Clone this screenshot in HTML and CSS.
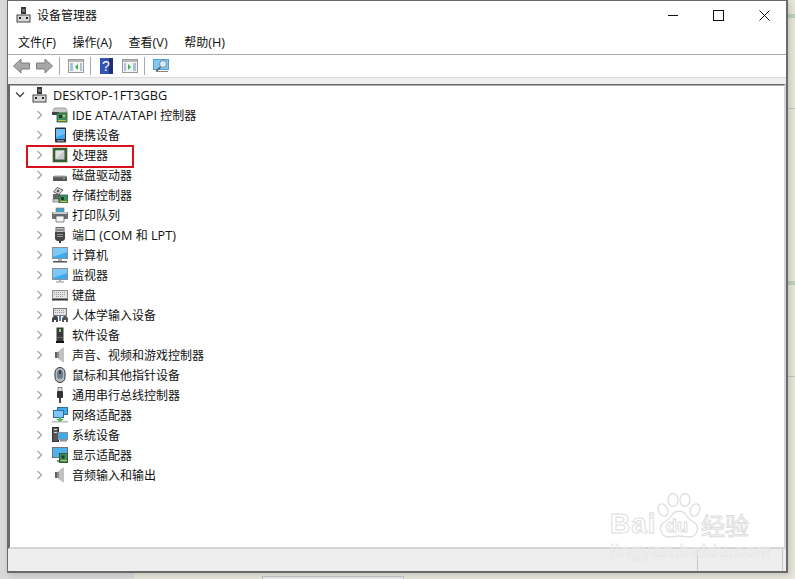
FILE: index.html
```html
<!DOCTYPE html>
<html lang="zh-CN">
<head>
    <meta charset="UTF-8">
    <meta name="viewport" content="width=device-width, initial-scale=1.0">
    <title>设备管理器</title>
    <link rel="stylesheet" href="styles.css">
</head>
<body>

<svg class="sprites" width="0" height="0">
    <defs>
        <symbol id="i-pc" viewBox="0 0 16 16">
            <rect x="5" y="0" width="5" height="7" fill="#333"/>
            <rect x="6" y="2" width="3" height="3" fill="#777"/>
            <rect x="1" y="8" width="13" height="7" fill="#d8d8d8" stroke="#444"/>
            <rect x="3" y="10" width="2" height="2" fill="#222"/>
            <rect x="10" y="10" width="2" height="2" fill="#222"/>
        </symbol>
        <symbol id="i-ide" viewBox="0 0 16 16">
            <path d="M1 3.500 2.500 1h11L15 3.500V6H1z" fill="#c9c9c9" stroke="#777" stroke-width=".6"/>
            <rect x="0" y="5" width="7" height="3" fill="#444"/>
            <rect x="5" y="6" width="10" height="9" fill="#3f8f5a" stroke="#28603c" stroke-width=".8"/>
            <rect x="7" y="8" width="3" height="3" fill="#1d3d2a"/>
            <rect x="11" y="8" width="2" height="2" fill="#d9c45a"/>
            <rect x="6" y="13" width="8" height="1" fill="#d9b84a"/>
        </symbol>
        <symbol id="i-phone" viewBox="0 0 16 16">
            <rect x="3" y="0.500" width="11" height="15" rx="1" fill="#2a2f38"/>
            <rect x="4" y="2" width="9" height="10" fill="#3fa3ee"/>
            <path d="M4 2h9v5L4 10z" fill="#6cc0f5"/>
            <rect x="5" y="13" width="7" height="1.500" fill="#8a8f96"/>
        </symbol>
        <symbol id="i-cpu" viewBox="0 0 16 16">
            <rect x="0.500" y="0.500" width="15" height="15" fill="none" stroke="#b9974a" stroke-dasharray="1 1"/>
            <rect x="1" y="1" width="14" height="14" fill="#2f5f43"/>
            <rect x="3.500" y="3.500" width="9" height="9" fill="#c9cbc9"/>
            <path d="M3.500 3.500h9l-9 9z" fill="#e2e4e2"/>
        </symbol>
        <symbol id="i-disk" viewBox="0 0 16 16">
            <path d="M2 9.500 3 8h10l1 1.500z" fill="#d2d2d2"/>
            <rect x="1" y="9.500" width="14" height="4.500" fill="#555"/>
            <rect x="1" y="9.500" width="14" height="1" fill="#8a8a8a"/>
            <rect x="11" y="11" width="2" height="1" fill="#66dd66"/>
        </symbol>
        <symbol id="i-store" viewBox="0 0 16 16">
            <path d="M5 .500 11 3 7 7.500 1.500 5z" fill="#d8d8d8" stroke="#444" stroke-width=".8"/>
            <circle cx="6" cy="4" r="1.300" fill="#555"/>
            <rect x="1" y="7" width="7" height="5" fill="#666"/>
            <rect x="1" y="12" width="6" height="3" fill="#cfcfcf" stroke="#555" stroke-width=".6"/>
            <rect x="7" y="8" width="9" height="8" fill="#3f8f5a" stroke="#28603c" stroke-width=".8"/>
            <rect x="9" y="10" width="3" height="3" fill="#1d3d2a"/>
            <rect x="8" y="14" width="7" height="1" fill="#d9b84a"/>
        </symbol>
        <symbol id="i-print" viewBox="0 0 16 16">
            <rect x="4" y="1" width="8" height="5" fill="#3fa3c8" stroke="#777" stroke-width=".6"/>
            <rect x="0" y="5" width="16" height="7" rx="1" fill="#6b6f75"/>
            <rect x="1" y="5" width="14" height="2" fill="#c8ccd0"/>
            <rect x="4" y="9" width="8" height="6" fill="#f6f6f6" stroke="#555" stroke-width=".7"/>
        </symbol>
        <symbol id="i-port" viewBox="0 0 16 16">
            <rect x="4" y="0.500" width="8" height="5" fill="#c8c8c8" stroke="#666"/>
            <path d="M6 2v2M8 2v2M10 2v2" stroke="#444"/>
            <path d="M3 5h10v7l-2 2H5l-2-2z" fill="#444"/>
            <rect x="5" y="7" width="6" height="1" fill="#999"/>
            <rect x="5" y="9" width="6" height="1" fill="#999"/>
            <rect x="7" y="14" width="2" height="2" fill="#333"/>
        </symbol>
        <symbol id="i-pcscreen" viewBox="0 0 16 16">
            <rect x="0.500" y="0.500" width="15" height="11" fill="#3fa9ee" stroke="#8a9299"/>
            <path d="M1 1h14v4L1 10z" fill="#7cc8f6"/>
            <rect x="6" y="12" width="4" height="2" fill="#a9b0b6"/>
            <rect x="1" y="14" width="14" height="1.500" fill="#555"/>
        </symbol>
        <symbol id="i-monitor" viewBox="0 0 16 16">
            <rect x="0.500" y="1.500" width="15" height="11" fill="#3fa9ee" stroke="#8a9299"/>
            <path d="M1 2h14v4L1 11z" fill="#7cc8f6"/>
            <rect x="7" y="13" width="2" height="1.500" fill="#a9b0b6"/>
            <rect x="4" y="14.500" width="8" height="1" fill="#8a9299"/>
        </symbol>
        <symbol id="i-kbd" viewBox="0 0 16 16">
            <rect x="0.500" y="3.500" width="15" height="8" fill="#e6e6e6" stroke="#8c8c8c"/>
            <path d="M2 5.500h12M2 7.500h12M4 9.500h8" stroke="#9a9a9a" stroke-dasharray="1 1"/>
            <rect x="0" y="12" width="16" height="1.500" fill="#333"/>
        </symbol>
        <symbol id="i-hid" viewBox="0 0 16 16">
            <rect x="1.500" y="1.500" width="13" height="7" fill="#e0e0e0" stroke="#777"/>
            <path d="M3 3.500h10M3 5.500h10" stroke="#999" stroke-dasharray="1 1"/>
            <path d="M0 15v-4l2-2h3l1 2v4H4v-2H2v2z" fill="#444"/>
            <path d="M10 15v-4l2-2h2l2 2v4h-2v-2h-2v2z" fill="#555"/>
            <rect x="7" y="9" width="2" height="5" fill="#3f7fc0"/>
        </symbol>
        <symbol id="i-soft" viewBox="0 0 16 16">
            <rect x="4.500" y="0.500" width="7" height="14" fill="#3a3a3a"/>
            <rect x="7" y="2" width="2" height="3" fill="#6fe07f"/>
            <rect x="4" y="14" width="8" height="2" fill="#111"/>
            <rect x="5" y="10" width="6" height="1" fill="#666"/>
        </symbol>
        <symbol id="i-sound" viewBox="0 0 16 16">
            <path d="M3 5h3l5.500-4.500v15L6 11H3z" fill="#8e9092"/>
            <path d="M7 3.500 11.500 .5v15L7 12z" fill="#bfc1c3"/>
            <rect x="3" y="5" width="2" height="6" fill="#5f6163"/>
        </symbol>
        <symbol id="i-mouse" viewBox="0 0 16 16">
            <rect x="3" y="0.500" width="10" height="15" rx="5" fill="#b7bcc2" stroke="#333"/>
            <rect x="5" y="3" width="6" height="9" rx="3" fill="#6f7c8a"/>
            <rect x="7" y="3" width="2" height="4" fill="#2f3a46"/>
        </symbol>
        <symbol id="i-usb" viewBox="0 0 16 16">
            <rect x="6" y="0.500" width="4" height="4" fill="#ddd" stroke="#666" stroke-width=".7"/>
            <rect x="5" y="4" width="6" height="7" rx="1" fill="#333"/>
            <rect x="7" y="11" width="2" height="5" fill="#444"/>
        </symbol>
        <symbol id="i-net" viewBox="0 0 16 16">
            <rect x="5.500" y="0.500" width="10" height="7" fill="#3fa9ee" stroke="#2f6f9f"/>
            <rect x="1.500" y="3.500" width="10" height="7" fill="#7cc8f6" stroke="#2f6f9f"/>
            <rect x="0" y="14" width="16" height="1.500" fill="#bbb"/>
            <path d="M7 10h2v2h3l-4 3-4-3h3z" fill="#49b84f"/>
        </symbol>
        <symbol id="i-sys" viewBox="0 0 16 16">
            <rect x="0.500" y="0.500" width="6" height="14" fill="#555" stroke="#333"/>
            <rect x="2" y="2" width="3" height="1" fill="#ddd"/>
            <rect x="2" y="5" width="3" height="1" fill="#ddd"/>
            <rect x="6.500" y="5.500" width="9" height="7" fill="#3fa9ee" stroke="#8a9299"/>
            <rect x="8" y="13" width="7" height="1.500" fill="#8a9299"/>
        </symbol>
        <symbol id="i-display" viewBox="0 0 16 16">
            <rect x="0.500" y="0.500" width="15" height="10" fill="#4fb0ee" stroke="#6b7680"/>
            <rect x="5" y="13" width="2" height="2" fill="#888"/>
            <rect x="7.500" y="6.500" width="8" height="9" fill="#3f8f5a" stroke="#28603c"/>
            <rect x="9.500" y="8.500" width="3" height="3" fill="#1d3d2a"/>
            <rect x="9" y="13" width="6" height="1" fill="#d9b84a"/>
        </symbol>
        <symbol id="i-chev-r" viewBox="0 0 8 10">
            <path d="M1.500 1 5.500 5l-4 4" fill="none" stroke="#a6a6a6" stroke-width="1.300"/>
        </symbol>
        <symbol id="i-chev-d" viewBox="0 0 10 8">
            <path d="M1 1.500 5 5.500l4-4" fill="none" stroke="#404040" stroke-width="1.300"/>
        </symbol>
    </defs>
</svg>

<!-- то, что видно за окном -->
<div class="backdrop">
    <i class="bd-green bd-g1"></i>
    <i class="bd-line bd-l1"></i>
    <i class="bd-green bd-g2"></i>
    <i class="bd-line bd-l2"></i>
    <i class="bd-tab"></i>
</div>

<div class="window">
    <header class="titlebar">
        <svg class="icon"><use href="#i-pc"/></svg>
        <span class="title">设备管理器</span>
        <div class="win-buttons">
            <span class="win-min"></span>
            <span class="win-max"></span>
            <svg class="win-close" width="11" height="11" viewBox="0 0 11 11">
                <path d="M.5.500l10 10M10.500.500l-10 10" stroke="#111" fill="none"/>
            </svg>
        </div>
    </header>

    <nav class="menubar">
        <span>文件<span class="lat">(F)</span></span>
        <span>操作<span class="lat">(A)</span></span>
        <span>查看<span class="lat">(V)</span></span>
        <span>帮助<span class="lat">(H)</span></span>
    </nav>

    <div class="toolbar">
        <svg class="arrow" width="17" height="16" viewBox="0 0 17 16">
            <path d="M.500 8 8 1v4h8.500v6H8v4z" fill="#a8a8a8" stroke="#7c7c7c"/>
        </svg>
        <svg class="arrow" width="17" height="16" viewBox="0 0 17 16">
            <path d="M16.500 8 9 1v4H.500v6H9v4z" fill="#a8a8a8" stroke="#7c7c7c"/>
        </svg>
        <i class="sep"></i>
        <svg class="tool" width="16" height="14" viewBox="0 0 16 14">
            <rect x="0.500" y="0.500" width="15" height="13" fill="#f4f4f4" stroke="#9a9a9a"/>
            <rect x="1" y="1" width="14" height="2" fill="#b9b9b9"/>
            <path d="M2 5h3M2 7h3M2 9h3M2 11h3M12 5h2M12 7h2M12 9h2M12 11h2" stroke="#5f8fc0"/>
            <path d="M10 5v6L7 8z" fill="#35b34a"/>
        </svg>
        <i class="sep"></i>
        <svg class="tool help" width="13" height="16" viewBox="0 0 13 16">
            <rect width="13" height="16" fill="#3553b5"/>
            <rect x="9" width="4" height="16" fill="#1d2f78"/>
            <text x="6" y="13" class="help-mark">?</text>
        </svg>
        <svg class="tool" width="16" height="14" viewBox="0 0 16 14">
            <rect x="0.500" y="0.500" width="15" height="13" fill="#f4f4f4" stroke="#9a9a9a"/>
            <rect x="1" y="1" width="14" height="2" fill="#b9b9b9"/>
            <path d="M2 5h2M2 7h2M2 9h2M2 11h2M11 5h3M11 7h3M11 9h3M11 11h3" stroke="#5f8fc0"/>
            <path d="M6 5v6l3-3z" fill="#35b34a"/>
        </svg>
        <i class="sep"></i>
        <svg class="tool" width="16" height="15" viewBox="0 0 16 15">
            <rect x="0.500" y="0.500" width="15" height="10" fill="#7cc8f6" stroke="#4f9fd0"/>
            <circle cx="10" cy="5" r="3.500" fill="#d5ecfb" stroke="#8a8a8a"/>
            <path d="M7.500 8 3 12.500" stroke="#555" stroke-width="1.500"/>
            <rect x="3" y="12" width="12" height="1" fill="#888"/>
        </svg>
    </div>

    <div class="band"></div>

    <main class="tree">
        <div class="row root">
            <svg class="chev-down"><use href="#i-chev-d"/></svg>
            <svg class="icon"><use href="#i-pc"/></svg>
            <span class="lat">DESKTOP-1FT3GBG</span>
        </div>
        <div class="row"><svg class="chev"><use href="#i-chev-r"/></svg><svg class="icon"><use href="#i-ide"/></svg><span><span class="lat">IDE ATA/ATAPI </span>控制器</span></div>
        <div class="row"><svg class="chev"><use href="#i-chev-r"/></svg><svg class="icon"><use href="#i-phone"/></svg><span>便携设备</span></div>
        <div class="row marked"><svg class="chev"><use href="#i-chev-r"/></svg><svg class="icon"><use href="#i-cpu"/></svg><span>处理器</span></div>
        <div class="row"><svg class="chev"><use href="#i-chev-r"/></svg><svg class="icon"><use href="#i-disk"/></svg><span>磁盘驱动器</span></div>
        <div class="row"><svg class="chev"><use href="#i-chev-r"/></svg><svg class="icon"><use href="#i-store"/></svg><span>存储控制器</span></div>
        <div class="row"><svg class="chev"><use href="#i-chev-r"/></svg><svg class="icon"><use href="#i-print"/></svg><span>打印队列</span></div>
        <div class="row"><svg class="chev"><use href="#i-chev-r"/></svg><svg class="icon"><use href="#i-port"/></svg><span>端口<span class="lat"> (COM </span>和<span class="lat"> LPT)</span></span></div>
        <div class="row"><svg class="chev"><use href="#i-chev-r"/></svg><svg class="icon"><use href="#i-pcscreen"/></svg><span>计算机</span></div>
        <div class="row"><svg class="chev"><use href="#i-chev-r"/></svg><svg class="icon"><use href="#i-monitor"/></svg><span>监视器</span></div>
        <div class="row"><svg class="chev"><use href="#i-chev-r"/></svg><svg class="icon"><use href="#i-kbd"/></svg><span>键盘</span></div>
        <div class="row"><svg class="chev"><use href="#i-chev-r"/></svg><svg class="icon"><use href="#i-hid"/></svg><span>人体学输入设备</span></div>
        <div class="row"><svg class="chev"><use href="#i-chev-r"/></svg><svg class="icon"><use href="#i-soft"/></svg><span>软件设备</span></div>
        <div class="row"><svg class="chev"><use href="#i-chev-r"/></svg><svg class="icon"><use href="#i-sound"/></svg><span>声音、视频和游戏控制器</span></div>
        <div class="row"><svg class="chev"><use href="#i-chev-r"/></svg><svg class="icon"><use href="#i-mouse"/></svg><span>鼠标和其他指针设备</span></div>
        <div class="row"><svg class="chev"><use href="#i-chev-r"/></svg><svg class="icon"><use href="#i-usb"/></svg><span>通用串行总线控制器</span></div>
        <div class="row"><svg class="chev"><use href="#i-chev-r"/></svg><svg class="icon"><use href="#i-net"/></svg><span>网络适配器</span></div>
        <div class="row"><svg class="chev"><use href="#i-chev-r"/></svg><svg class="icon"><use href="#i-sys"/></svg><span>系统设备</span></div>
        <div class="row"><svg class="chev"><use href="#i-chev-r"/></svg><svg class="icon"><use href="#i-display"/></svg><span>显示适配器</span></div>
        <div class="row"><svg class="chev"><use href="#i-chev-r"/></svg><svg class="icon"><use href="#i-sound"/></svg><span>音频输入和输出</span></div>
    </main>

    <footer class="statusbar">
        <div class="status-cell grow"></div>
        <div class="status-cell wide"></div>
        <div class="status-cell"></div>
    </footer>
</div>

<!-- водяной знак поверх окна -->
<div class="watermark">
    <svg class="paw" width="44" height="46" viewBox="0 0 44 46">
        <g fill="none" stroke="#dddddd" stroke-width="1.300">
            <ellipse cx="6" cy="17" rx="4.500" ry="6.500" transform="rotate(-25 6 17)"/>
            <ellipse cx="16" cy="7" rx="5" ry="6.500"/>
            <ellipse cx="28" cy="7" rx="5" ry="6.500"/>
            <ellipse cx="38" cy="17" rx="4.500" ry="6.500" transform="rotate(25 38 17)"/>
            <path d="M12 44c-8 0-11-9-6-14 4-3 7-4 9-8 3-5 11-5 14 0 2 4 5 5 9 8 5 5 2 14-6 14-4 0-5-1-10-1s-6 1-10 1z"/>
        </g>
    </svg>
    <span class="wm-bai">Bai</span>
    <span class="wm-du">du</span>
    <span class="wm-cn">经验</span>
    <span class="wm-url">jingyan.baidu.com</span>
</div>

</body>
</html>
```

FILE: styles.css
```css
html, body {
    margin: 0;
    padding: 0;
    height: 579px;
    overflow: hidden;
}
body {
    position: relative;
    background: linear-gradient(90deg, #d9d9d9 0, #d9d9d9 134px, #e6e6da 134px);
    font-family: "Open Sans", "Noto Sans CJK SC", sans-serif;
    font-size: 12px;
    color: #111;
}
.sprites {
    position: absolute;
}
.lat {
    font-size: 12.7px;
}
.backdrop i {
    position: absolute;
    display: block;
}
.bd-green {
    left: 788px;
    width: 7px;
    height: 4px;
    background: #b9d2bb;
}
.bd-g1 {
    top: 14px;
}
.bd-g2 {
    top: 281px;
}
.bd-line {
    left: 788px;
    width: 7px;
    height: 1px;
    background: #c4c4c4;
}
.bd-l1 {
    top: 108px;
}
.bd-l2 {
    top: 376px;
}
.bd-tab {
    left: 262px;
    top: 576px;
    width: 140px;
    height: 3px;
    border: 1px solid #c4c4c4;
    background: #e9e9e9;
}
.window {
    position: relative;
    width: 781px;
    height: 573px;
    margin-left: 7px;
    box-sizing: border-box;
    border: 1px solid #6a6a6a;
    border-width: 1px 2px 2px 1px;
    background: #fff;
    display: flex;
    flex-direction: column;
    box-shadow: 2px 2px 6px rgba(0, 0, 0, 0.15);
}
.icon {
    width: 16px;
    height: 16px;
    flex: none;
}
.titlebar {
    height: 29px;
    box-sizing: border-box;
    display: flex;
    align-items: center;
    padding: 0 0 2px 8px;
    flex: none;
}
.title {
    margin-left: 5px;
    font-size: 12px;
}
.win-buttons {
    margin: 2px 0 0 auto;
    display: flex;
    align-items: center;
    gap: 35px;
    padding-right: 16px;
}
.win-min {
    width: 10px;
    height: 1px;
    background: #111;
}
.win-max {
    width: 9px;
    height: 9px;
    border: 1px solid #111;
}
.menubar {
    height: 24px;
    flex: none;
    display: flex;
    align-items: center;
    gap: 16.5px;
    padding-left: 10px;
    border-bottom: 1px solid #a9a9a9;
}
.toolbar {
    height: 22px;
    flex: none;
    display: flex;
    align-items: center;
    padding-left: 5px;
}
.arrow {
    margin-right: 6px;
}
.sep {
    width: 1px;
    height: 18px;
    background: #a9a9a9;
    margin-right: 8px;
}
.tool {
    margin-right: 6px;
}
.tool.help {
    margin: 0 9px 0 1px;
}
.help-mark {
    fill: #fff;
    font-family: "Liberation Sans", sans-serif;
    font-size: 14px;
    text-anchor: middle;
}
.band {
    height: 6px;
    flex: none;
    background: #eeeeee;
    border-top: 1px solid #dcdcdc;
}
.tree {
    flex: 1;
    border-top: 1px solid #6a6a6a;
    border-left: 2px solid #6a6a6a;
    border-right: 2px solid #d5d5d5;
    border-bottom: 2px solid #d5d5d5;
    box-shadow: inset 0 1px 0 #b0b0b0;
}
.row {
    height: 20px;
    display: flex;
    align-items: center;
    padding-left: 26px;
    position: relative;
}
.row.root {
    padding-left: 5px;
}
.chev {
    width: 8px;
    height: 10px;
    margin-right: 8px;
    flex: none;
}
.chev-down {
    width: 10px;
    height: 8px;
    margin-right: 7px;
    flex: none;
}
.row .icon {
    margin-right: 4px;
}
.row.root .icon {
    margin-right: 5px;
}
.row.marked::after {
    content: "";
    position: absolute;
    left: 16px;
    top: 0;
    width: 104px;
    height: 19px;
    border: 2px solid #d7101c;
}
.statusbar {
    height: 22px;
    flex: none;
    background: #eeeeee;
    display: flex;
}
.status-cell {
    width: 3px;
    border-left: 1px solid #c8c8c8;
}
.status-cell.grow {
    flex: 1;
    border-left: none;
}
.status-cell.wide {
    width: 84px;
}
.watermark {
    position: absolute;
    left: 610px;
    top: 493px;
    width: 145px;
    height: 70px;
    pointer-events: none;
}
.watermark > * {
    position: absolute;
    white-space: nowrap;
    color: rgba(255, 255, 255, 0.4);
    font-family: "Liberation Sans", sans-serif;
    -webkit-text-stroke: 1px #dddddd;
}
.paw {
    left: 47px;
    top: 0;
}
.wm-bai {
    left: 0;
    top: 17px;
    font-size: 28px;
    font-weight: bold;
    letter-spacing: 1px;
    line-height: 28px;
}
.wm-du {
    left: 56px;
    top: 24px;
    font-size: 18px;
    font-weight: bold;
    line-height: 18px;
}
.wm-cn {
    left: 91px;
    top: 18px;
    font-family: "Noto Sans CJK SC", sans-serif;
    font-size: 24px;
    line-height: 28px;
}
.wm-url {
    left: 0;
    top: 48px;
    font-size: 19px;
    line-height: 20px;
    letter-spacing: 0.5px;
    -webkit-text-stroke-width: 0.6px;
    -webkit-text-stroke-color: #e2e2e2;
}
```
